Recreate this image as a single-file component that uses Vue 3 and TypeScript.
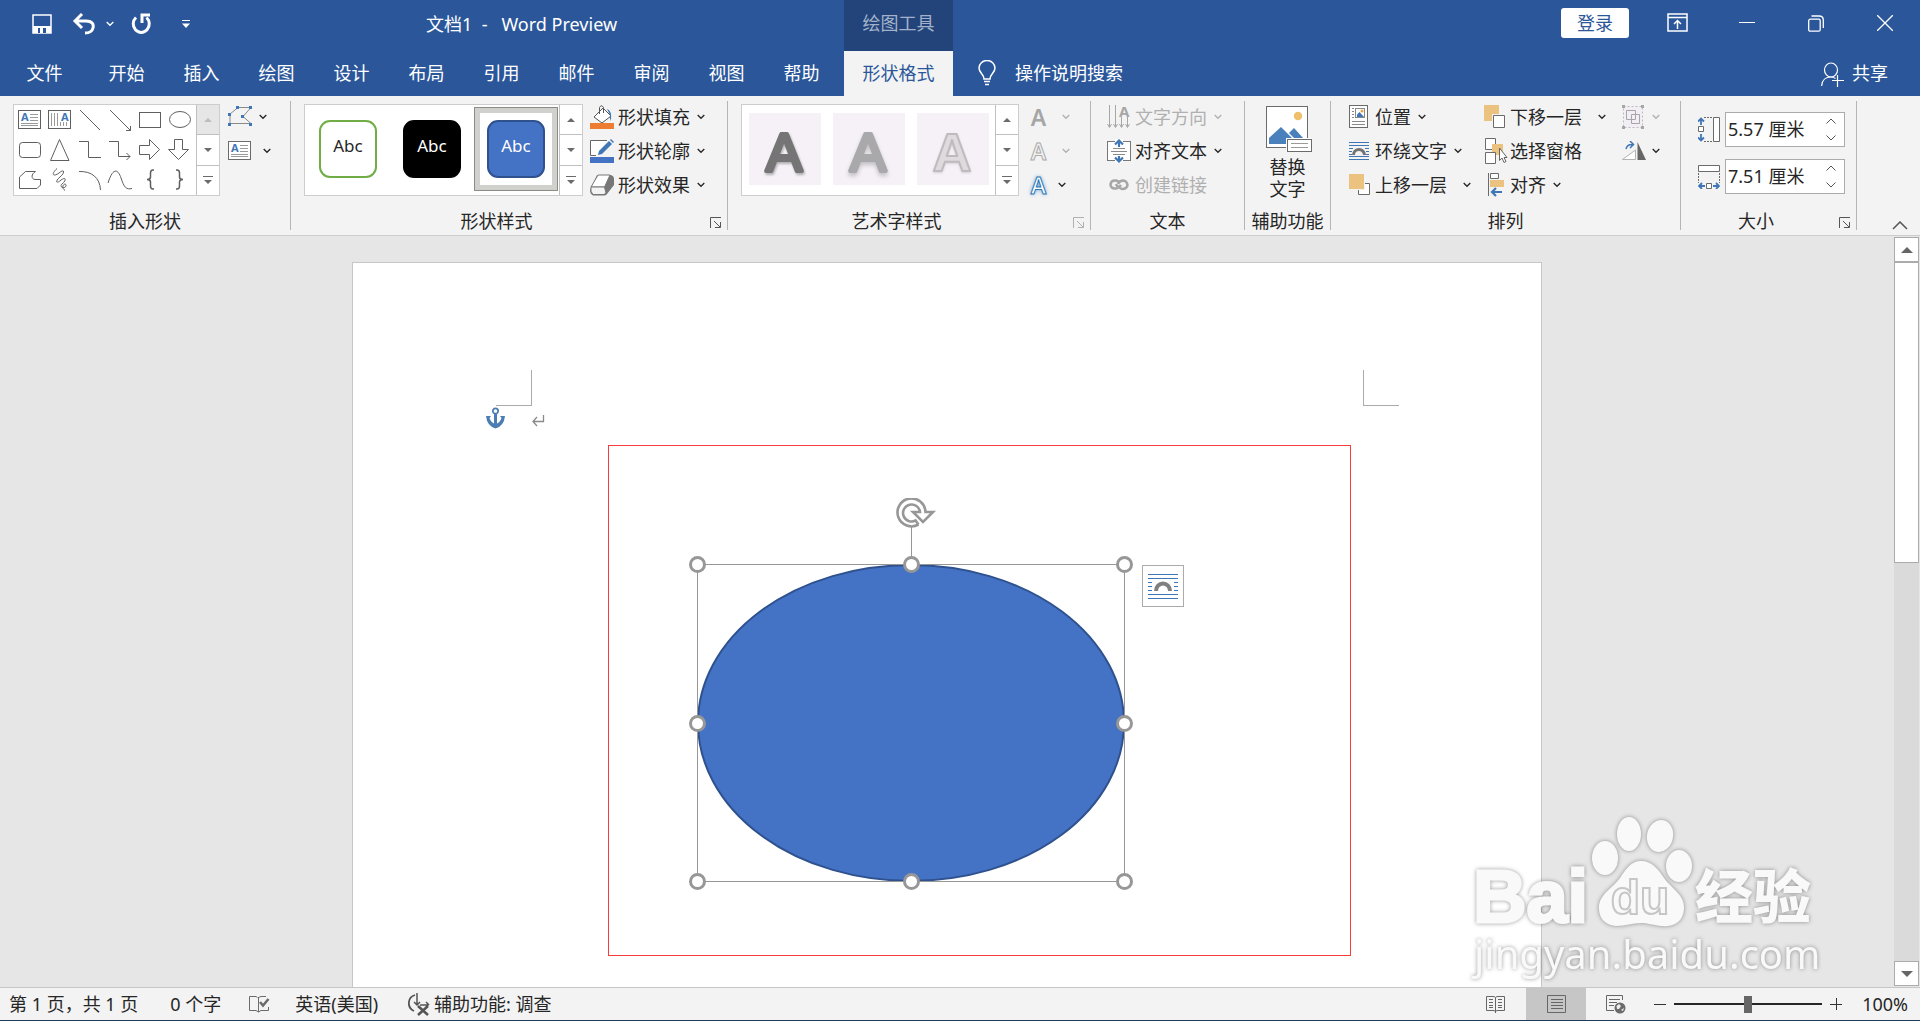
<script setup lang="ts">
import { h, ref } from 'vue'

type IconDef = [number, number, string]

const line = 'fill="none" stroke="currentColor"'
const grey = 'fill="none" stroke="#6b6b6b"'
const wrapLines =
  '<path d="M0 1.5H20M0 4.5H20M0 15.5H20M0 18.5H20" stroke="#3f76b5" fill="none"/><path d="M0 7.5H4M0 10.5H3M16 7.5H20M17 10.5H20M0 13.5H3M17 13.5H20" stroke="#3f76b5" fill="none"/><path d="M4.5 14a5.5 5.5 0 0 1 11 0" stroke="#737373" stroke-width="3" fill="none"/>'

const icons: Record<string, IconDef> = {
  save: [20, 20, '<path d="M1 1H19V19H1Z" fill="none" stroke="#fff" stroke-width="1.5"/><path d="M1 12H19V19H1Z" fill="#fff"/><path d="M6 14H14V19H6Z" fill="#2b579a"/><path d="M8 14H11V19H8Z" fill="#fff"/>'],
  undo: [24, 22, '<path d="M10 1L3 8L10 15M3 8H14C20 8 22 11 21 15C20 19 17 20 13 20" fill="none" stroke="#fff" stroke-width="3"/>'],
  redo: [22, 22, '<path d="M6 4.5A8 8.5 0 1 0 16.5 4.5" fill="none" stroke="#fff" stroke-width="3"/><path d="M12 10V2H20" fill="none" stroke="#fff" stroke-width="3"/>'],
  custom: [8, 8, '<path d="M0 .5H8" stroke="#fff"/><path d="M0 3.5H8L4 8Z" fill="#fff"/>'],
  display: [22, 20, '<path d="M1 1H20V18H1ZM1 4.5H20" fill="none" stroke="#fff" stroke-width="1.5"/><path d="M10.5 16V8M7 11L10.5 7.5L14 11" fill="none" stroke="#fff" stroke-width="1.5"/>'],
  min: [16, 16, '<path d="M0 7.5H16" stroke="#fff"/>'],
  restore: [16, 17, '<rect x=".7" y="4.2" width="11.5" height="12" rx="1.5" fill="none" stroke="#fff" stroke-width="1.3"/><path d="M3.5 1H11Q15.3 1 15.3 5V13" fill="none" stroke="#fff" stroke-width="1.3"/>'],
  close: [16, 16, '<path d="M0 0L16 16M16 0L0 16" stroke="#fff" stroke-width="1.3"/>'],
  bulb: [18, 26, '<path d="M6 19C6 14 1 13 1 8A8 7.5 0 0 1 17 8C17 13 12 14 12 19Z" fill="none" stroke="#fff" stroke-width="1.5"/><path d="M6 21.5H12M7 24.5H11" stroke="#fff" stroke-width="1.5"/>'],
  person: [23, 30, '<ellipse cx="10" cy="12" rx="6.5" ry="7" fill="none" stroke="#fff" stroke-width="1.2"/><path d="M.6 28C1 22 5 19 10 19C12 19 13 19.5 14.5 20.5M11 22.5H23M16.5 17V29" fill="none" stroke="#fff" stroke-width="1.2"/>'],
  chev: [8, 6, `<path d="M.7 1L4 4.3L7.3 1" ${line} stroke-width="1.3"/>`],
  up: [8, 4, '<path d="M0 4L4 0L8 4Z" fill="currentColor"/>'],
  down: [8, 4, '<path d="M0 0L4 4L8 0Z" fill="currentColor"/>'],
  scrollUp: [12, 6, '<path d="M0 6L6 0L12 6Z" fill="currentColor"/>'],
  scrollDown: [12, 6, '<path d="M0 0L6 6L12 0Z" fill="currentColor"/>'],
  more: [10, 8, '<path d="M0 .5H10" stroke="currentColor"/><path d="M1 4H9L5 8Z" fill="currentColor"/>'],
  launch: [12, 12, `<path d="M.5 11V.5H11M4 4L10 10M10.5 5V10.5H5" ${line}/>`],
  collapse: [16, 9, `<path d="M1 8L8 1L15 8" ${line} stroke-width="1.5"/>`],
  editShape: [25, 21, '<path d="M10 1.5H23L15 10.5L23 17.5H2V8Z" fill="none" stroke="#8a8a8a"/><path d="M8 0h3v3h-3zM21 0h3v3h-3zM0 7h3v3h-3zM13 9h3v3h-3zM0 17h3v3h-3zM21 17h3v3h-3z" fill="#3f76b5"/>'],
  textbox: [23, 19, '<rect x=".5" y=".5" width="22" height="18" fill="#fff" stroke="#6b6b6b"/><path d="M12 4.5H20M12 7.5H20M12 10.5H20M3 13.5H20M3 15.5H20" stroke="#9a9a9a"/><text x="3" y="11" font-family="Noto Sans" font-weight="700" font-size="11" fill="#3f76b5">A</text>'],
  fill: [24, 24, '<path d="M4 12L13 3L21 11L12 18Z" fill="#fff" stroke="#555"/><path d="M9.5 9V2.5Q11.5-1 13.5 2.5V8" fill="none" stroke="#555"/><path d="M17 4Q22 5 21 16Q19 13 20 10Z" fill="#3f76b5"/><rect y="18" width="24" height="6" fill="#ed7d31"/>'],
  outline: [24, 24, '<path d="M17 1.5H.5V16.5H6" fill="#fff" stroke="#666"/><path d="M8 16L9 12L19 2L22 5L12 15Z" fill="#3f76b5"/><path d="M20 1L21 0L24 3L23 4Z" fill="#3f76b5"/><rect y="18" width="24" height="6" fill="#4472c4"/>'],
  effect: [25, 22, '<path d="M7 1H21Q24 2 24 5V11L17 20Q16 21.500 14 21.500H3Q0 20 0 16Z" fill="#777"/><path d="M8 1H20L14.500 13H1Z" fill="#fff" stroke="#777"/><path d="M1 13H14.500L16 19L14 20.500H3Q0 18 1 13Z" fill="#f3f3f3" stroke="#777"/>'],
  textDir: [24, 24, '<path d="M2.5 0V22M8.5 0V22M14.5 12V22M20.5 12V22M.5 19L2.5 22.5L4.5 19M6.5 19L8.5 22.5L10.5 19M12.5 19L14.5 22.5L16.5 19M18.5 19L20.5 22.5L22.5 19" fill="none" stroke="#a6a6a6"/><text x="12" y="12" font-family="Noto Sans" font-weight="700" font-size="15" fill="#a6a6a6">A</text>'],
  alignText: [25, 24, '<rect x=".5" y="2.5" width="23" height="19" fill="#fff" stroke="#777"/><path d="M6 9.5H18M4 12.5H20M6 15.5H18" stroke="#8a8a8a"/><path d="M8 0H16V8H8ZM8 17H16V24H8Z" fill="#fff"/><path d="M12 8V2M8 5.5L12 1.5L16 5.5M12 17V22M8 18.5L12 22.5L16 18.5" fill="none" stroke="#3f76b5" stroke-width="2.2"/>'],
  link: [20, 14, '<path d="M11 4L7 2.5Q2 2 1.5 6.5Q2 11 6.5 10.5L9 10M9 9L13 11Q18 11 18.5 7Q18 3 14 2.5Q11 2.5 9 6M7 6Q9 11 12 7" fill="none" stroke="#a6a6a6" stroke-width="2.5"/>'],
  alt: [46, 46, '<rect x=".5" y=".5" width="41" height="41" fill="#fff" stroke="#6b6b6b"/><circle cx="32" cy="10" r="4.2" fill="#eec06b"/><path d="M3 38V32L15 21L26 32V38Z" fill="#4a80bb"/><path d="M23 27L28 22L38 33H29Z" fill="#4a80bb"/><rect x="20" y="32" width="26" height="15" fill="#fff"/><rect x="21.5" y="33.5" width="24" height="12" fill="#fff" stroke="#6b6b6b"/><path d="M25 37.5H42M25 41.5H42" stroke="#9a9a9a"/>'],
  position: [20, 24, '<rect x=".5" y=".5" width="18" height="22" fill="#fff" stroke="#6b6b6b"/><path d="M3 3.5H5M3 6.5H5M3 9.5H5M3 12.5H5M3 16.5H16M3 19.5H16" stroke="#8a8a8a"/><rect x="6.5" y="3.5" width="9" height="9" fill="#fff" stroke="#8a8a8a"/><path d="M8 12V9.5L10.5 7L15 12Z" fill="#3f76b5"/><circle cx="13" cy="6" r="1.5" fill="#e8a33d"/>'],
  wrap: [20, 20, wrapLines],
  front: [22, 22, '<path d="M9.5 9.5H20.5V20.5H9.5Z" fill="#fff" stroke="#6b6b6b"/><path d="M0 0H16V16H0Z" fill="#f3f3f3"/><path d="M0 0H15V15H0Z" fill="#ecc281"/>'],
  back: [22, 24, '<path d="M0 0H15V16H0Z" fill="#ecc281"/><path d="M8 9H22V23H8Z" fill="#f3f3f3"/><path d="M9.5 10.5H20.5V22.5H9.5Z" fill="#fff" stroke="#6b6b6b"/>'],
  pane: [24, 26, '<path d="M1.5 .5H11.5V11.5H1.5Z" fill="#fff" stroke="#6b6b6b"/><path d="M8 6H19V17H8Z" fill="#ecc281"/><path d="M1.5 14.5H11.5V25.5H1.5Z" fill="#fff" stroke="#6b6b6b"/><path d="M15.5 10V22.5L18 20L20 24.5L22 23.5L20 19.5H23Z" fill="#fff" stroke="#666"/>'],
  align: [20, 24, '<path d="M4.500 0V23M6.500 .5H14.500V5.500H6.500Z" fill="#fff" stroke="#6b6b6b"/><path d="M6 7H20V14H6Z" fill="#ecc281"/><path d="M18 19H8M12 15L8 19L12 23" fill="none" stroke="#3f76b5" stroke-width="2.200"/>'],
  group: [22, 24, '<path d="M1.5 1.5H20.5V22.5H1.5Z" fill="#f3eef5" stroke="#bbb" stroke-dasharray="2 2"/><path d="M4.5 5.5H13.5V14.5H4.5ZM9.5 9.5H17.5V18.5H9.5Z" fill="none" stroke="#a6a6a6"/><path d="M0 0h3v3h-3zM19 0h3v3h-3zM0 21h3v3h-3zM19 21h3v3h-3z" fill="#a6a6a6"/>'],
  rotate: [24, 20, '<path d="M.5 18.5H13.5V9Z" fill="#fff" stroke="#b3b3b3"/><path d="M15.5 1V19H24Z" fill="#666"/><path d="M4 8Q5 3 11 3.5M8 0L11.5 3.5L8 7" fill="none" stroke="#3f76b5" stroke-width="1.5"/>'],
  height: [22, 25, '<path d="M15.5 .5H21.5V24.5H15.5Z" fill="#fff" stroke="#6b6b6b"/><path d="M6 .5H15M6 24.5H15" stroke="#6b6b6b" stroke-dasharray="2 1"/><path d="M.5 9.5H5.5V14.5H.5Z" fill="#fff" stroke="#6b6b6b"/><path d="M3 8V2M0 4.5L3 1.5L6 4.5M3 17V23M0 20.5L3 23.5L6 20.5" fill="none" stroke="#3f76b5" stroke-width="1.8"/>'],
  width: [22, 24, '<path d="M.5 .5H21.5V6.5H.5Z" fill="#fff" stroke="#6b6b6b"/><path d="M.5 8V18M21.5 8V18" stroke="#6b6b6b" stroke-dasharray="2 1"/><path d="M8.5 18.5H13.5V23.5H8.5Z" fill="#fff" stroke="#6b6b6b"/><path d="M7 21H2M4 18L1 21L4 24M15 21H20M18 18L21 21L18 24" fill="none" stroke="#3f76b5" stroke-width="1.8"/>'],
  spinUp: [10, 6, `<path d="M.5 5.5L5 1L9.5 5.5" ${line}/>`],
  spinDown: [10, 6, `<path d="M.5 .5L5 5L9.5 .5" ${line}/>`],
  proof: [22, 20, `<path d="M9.5 3.5L8 2.5H1.5V16.5H8L10.5 18L13 16.5H20.5V13M10.5 3V18M10.5 3.5L13 2.5H18" ${grey}/><path d="M12 8L15 11.5L20.5 5" fill="none" stroke="#6b6b6b" stroke-width="2.5"/>`],
  access: [22, 24, '<path d="M7 3A8.5 8.5 0 0 0 6 19" fill="none" stroke="#555" stroke-width="1.8"/><path d="M9 1V13M6 10L9 13L12 10M12 13H20M18 10L20.5 12.5L18 15" fill="none" stroke="#555" stroke-width="1.5"/><path d="M10 14L20 23M20 14L10 23" fill="none" stroke="#555" stroke-width="2.5"/>'],
  read: [20, 19, '<path d="M9.5 2.5L8 1.5H.5V15.5H8L9.5 16.5L11 15.5H18.5V1.5H11L9.5 2.5V18M3 4.5H7M3 7.5H7M3 10.5H7M3 12.5H7M12 4.5H16M12 7.5H16M12 10.5H16M12 12.5H16" fill="none" stroke="#666"/>'],
  print: [19, 18, '<path d="M.5 .5H18.5V17.5H.5ZM4 4.5H16M4 7.5H16M4 10.5H16M4 13.5H16" fill="none" stroke="#666"/>'],
  web: [20, 19, '<path d="M16.5 5V.5H.5V15.5H8M3 4.5H14M3 7.5H11M3 10.5H8" fill="none" stroke="#666"/><circle cx="14" cy="13" r="5.5" fill="#6b6b6b"/><path d="M10.5 11L13 9L15 11L13 14L11 14ZM15 15L18 13L17 16Z" fill="#eee"/>'],
  minus: [12, 12, '<path d="M0 6.5H12" stroke="#333"/>'],
  plus: [12, 12, '<path d="M0 6.5H12M6.5 0V12" stroke="#333"/>'],
  anchor: [20, 22, '<circle cx="9.5" cy="4" r="2.7" fill="none" stroke="#4a7db3" stroke-width="1.7"/><path d="M8 6H11V20H8Z" fill="#4a7db3"/><path d="M0 9H5L3.5 11Q5 16 9.5 17Q14 16 15.5 11L14 9H19Q18 19 9.5 21.5Q1 19 0 9Z" fill="#4a7db3"/>'],
  ret: [13, 12, '<path d="M11.5 0V6.5H1M5 2L1 6.5L5 11" fill="none" stroke="#8a8a8a" stroke-width="1.3"/>'],
}

const Icon = (props: { name: string }) => {
  const [width, height, innerHTML] = icons[props.name]
  return h('svg', { class: 'icon', width, height, viewBox: `0 0 ${width} ${height}`, innerHTML, 'aria-hidden': 'true' })
}
Icon.props = ['name']

const shapes: [string, string][] = [
  ['文本框', '<rect x="4.5" y="5.5" width="22" height="18"/><path d="M16 9.5H24M16 12.5H24M16 15.5H24M7 18.5H24M7 20.5H24" stroke="#9a9a9a"/><text x="7" y="16" font-family="Noto Sans" font-weight="700" font-size="11" stroke="none" fill="#3f76b5">A</text>'],
  ['竖排文本框', '<rect x="4.5" y="5.5" width="22" height="18"/><path d="M7.5 8V21M10.5 8V21M13.5 8V21M16.5 17V21M19.5 17V21M22.5 17V21" stroke="#9a9a9a"/><text x="17" y="16" font-family="Noto Sans" font-weight="700" font-size="11" stroke="none" fill="#3f76b5">A</text>'],
  ['直线', '<path d="M6 5L26 25"/>'],
  ['箭头', '<path d="M6 5L26.5 25.5M26.5 21V25.5H22"/>'],
  ['矩形', '<rect x="5.5" y="7.5" width="21" height="15"/>'],
  ['椭圆', '<ellipse cx="16" cy="14.5" rx="10.5" ry="8"/>'],
  ['圆角矩形', '<rect x="5.5" y="7.5" width="21" height="15" rx="3"/>'],
  ['三角形', '<path d="M15.5 4.5L25 25.5H6.5Z"/>'],
  ['肘形连接符', '<path d="M5 6.5H14.5V22.5H27"/>'],
  ['肘形箭头', '<path d="M5 6.5H14.5V21.5H26M22.5 18L26 21.5L22.5 25"/>'],
  ['右箭头', '<path d="M5.5 10.5H15.5V4.5L25.5 14.5L15.5 24.5V19.5H5.5Z"/>'],
  ['下箭头', '<path d="M10.5 4.5H18.5V14.5H24.5L14.5 24.5L4.5 14.5H10.5Z"/>'],
  ['任意多边形', '<path d="M5.5 12L11.5 6.5H21.5C17 9 17 14 21 14.5H26.5V20L23 23.5H5.5Z"/>'],
  ['自由曲线', '<path d="M13 3.5C6 10 10 12 15 8C21 3 21 8 16 12C10 17 13 19 17 15C23 11 22 16 18 19C14 23 23 24 22 20C21 17 16 22 21 25.5"/>'],
  ['弧形', '<path d="M5 6.5C18 6 26 13 26.5 25"/>'],
  ['曲线', '<path d="M4 18C9 2 14 4 17 13S22 25 28 23.5"/>'],
  ['左大括号', '<path stroke-width="1.5" d="M20 5H19Q16.5 5 16.5 8V12Q16.5 14.5 13 14.5Q16.5 14.5 16.5 17V21Q16.5 24 19 24H20"/>'],
  ['右大括号', '<path stroke-width="1.5" d="M12 5H13Q15.5 5 15.5 8V12Q15.5 14.5 19 14.5Q15.5 14.5 15.5 17V21Q15.5 24 13 24H12"/>'],
]

const tabs = ['开始', '插入', '绘图', '设计', '布局', '引用', '邮件', '审阅', '视图', '帮助']
const windowButtons = [
  ['display', '功能区显示选项'],
  ['min', '最小化'],
  ['restore', '向下还原'],
  ['close', '关闭'],
]
const fxButtons = [
  ['fill', '形状填充'],
  ['outline', '形状轮廓'],
  ['effect', '形状效果'],
]
const handles = [
  [8.5, 8.5], [222.5, 8.5], [435.5, 8.5],
  [8.5, 167.5], [435.5, 167.5],
  [8.5, 325.5], [222.5, 325.5], [435.5, 325.5],
]

const shapeHeight = ref('5.57 厘米')
const shapeWidth = ref('7.51 厘米')
const zoom = ref(100)
</script>

<template>
  <div class="app">
    <header class="header">
      <div class="head-left">
        <div class="title-row">
          <button class="qat save" aria-label="保存"><Icon name="save" /></button>
          <button class="qat undo" aria-label="撤消"><Icon name="undo" /></button>
          <button class="qat arrow" aria-label="撤消选项"><Icon name="chev" /></button>
          <button class="qat redo" aria-label="重复"><Icon name="redo" /></button>
          <button class="qat custom" aria-label="自定义快速访问工具栏"><Icon name="custom" /></button>
          <h1 class="title">文档1&nbsp; -&nbsp;&nbsp; Word Preview</h1>
        </div>
        <nav class="tabs">
          <button class="tab file">文件</button>
          <button v-for="t in tabs" :key="t" class="tab">{{ t }}</button>
        </nav>
      </div>
      <div class="context">
        <span class="context-name">绘图工具</span>
        <button class="tab active">形状格式</button>
      </div>
      <div class="head-right">
        <div class="window-row">
          <button class="login">登录</button>
          <button v-for="[icon, label] in windowButtons" :key="icon" class="win" :aria-label="label"><Icon :name="icon" /></button>
        </div>
        <div class="search-row">
          <button class="tell"><Icon name="bulb" />操作说明搜索</button>
          <button class="share"><Icon name="person" />共享</button>
        </div>
      </div>
    </header>

    <section class="ribbon" aria-label="形状格式">
      <section class="group insert">
        <div class="body">
          <div class="gallery">
            <div class="shape-grid">
              <button v-for="[name, art] in shapes" :key="name" class="shape" :aria-label="name">
                <svg width="30" height="30" viewBox="0 0 30 30" fill="none" stroke="#5f5f5f" aria-hidden="true" v-html="art"></svg>
              </button>
            </div>
            <div class="scroller">
              <button disabled aria-label="上一行"><Icon name="up" /></button>
              <button aria-label="下一行"><Icon name="down" /></button>
              <button aria-label="其他"><Icon name="more" /></button>
            </div>
          </div>
          <div class="rows">
            <button class="row edit" aria-label="编辑形状"><Icon name="editShape" /><Icon name="chev" /></button>
            <button class="row box" aria-label="文本框"><Icon name="textbox" /><Icon name="chev" /></button>
          </div>
        </div>
        <footer class="foot"><h2>插入形状</h2></footer>
      </section>

      <section class="group styles">
        <div class="body">
          <div class="gallery">
            <div class="style-list">
              <button class="style"><span class="swatch green">Abc</span></button>
              <button class="style"><span class="swatch black">Abc</span></button>
              <button class="style selected"><span class="swatch blue">Abc</span></button>
            </div>
            <div class="scroller">
              <button aria-label="上一行"><Icon name="up" /></button>
              <button aria-label="下一行"><Icon name="down" /></button>
              <button aria-label="其他"><Icon name="more" /></button>
            </div>
          </div>
          <div class="rows">
            <button v-for="[icon, label] in fxButtons" :key="icon" class="row">
              <span class="slot"><Icon :name="icon" /></span>{{ label }}<Icon name="chev" />
            </button>
          </div>
        </div>
        <footer class="foot"><h2>形状样式</h2><button class="launcher" aria-label="设置形状格式"><Icon name="launch" /></button></footer>
      </section>

      <section class="group wordart">
        <div class="body">
          <div class="gallery">
            <div class="art-list">
              <button v-for="k in 3" :key="k" class="art" :aria-label="'艺术字 ' + k">
                <svg width="72" height="72" viewBox="0 0 72 72" :class="'art-' + k"><text x="35" y="58" text-anchor="middle">A</text></svg>
              </button>
            </div>
            <div class="scroller">
              <button aria-label="上一行"><Icon name="up" /></button>
              <button aria-label="下一行"><Icon name="down" /></button>
              <button aria-label="其他"><Icon name="more" /></button>
            </div>
          </div>
          <div class="rows">
            <button class="row off" disabled aria-label="文本填充"><span class="glyph solid">A</span><Icon name="chev" /></button>
            <button class="row off" disabled aria-label="文本轮廓"><span class="glyph hollow">A</span><Icon name="chev" /></button>
            <button class="row" aria-label="文本效果"><span class="glyph glow">A</span><Icon name="chev" /></button>
          </div>
        </div>
        <footer class="foot"><h2>艺术字样式</h2><button class="launcher off" disabled aria-label="设置文本效果格式"><Icon name="launch" /></button></footer>
      </section>

      <section class="group text">
        <div class="body">
          <div class="rows">
            <button class="row off" disabled><span class="slot"><Icon name="textDir" /></span>文字方向<Icon name="chev" /></button>
            <button class="row"><span class="slot"><Icon name="alignText" /></span>对齐文本<Icon name="chev" /></button>
            <button class="row off" disabled><span class="slot"><Icon name="link" /></span>创建链接</button>
          </div>
        </div>
        <footer class="foot"><h2>文本</h2></footer>
      </section>

      <section class="group access">
        <div class="body">
          <button class="big"><Icon name="alt" /><span>替换<br />文字</span></button>
        </div>
        <footer class="foot"><h2>辅助功能</h2></footer>
      </section>

      <section class="group arrange">
        <div class="body">
          <div class="rows">
            <button class="row"><span class="slot"><Icon name="position" /></span>位置<Icon name="chev" /></button>
            <button class="row"><span class="slot"><Icon name="wrap" /></span>环绕文字<Icon name="chev" /></button>
            <button class="row split"><span class="slot"><Icon name="front" /></span>上移一层<Icon name="chev" /></button>
          </div>
          <div class="rows">
            <button class="row split"><span class="slot"><Icon name="back" /></span>下移一层<Icon name="chev" /></button>
            <button class="row"><span class="slot"><Icon name="pane" /></span>选择窗格</button>
            <button class="row"><span class="slot"><Icon name="align" /></span>对齐<Icon name="chev" /></button>
          </div>
          <div class="rows">
            <button class="row off" disabled aria-label="组合"><span class="slot"><Icon name="group" /></span><Icon name="chev" /></button>
            <button class="row" aria-label="旋转"><span class="slot"><Icon name="rotate" /></span><Icon name="chev" /></button>
          </div>
        </div>
        <footer class="foot"><h2>排列</h2></footer>
      </section>

      <section class="group size">
        <div class="body">
          <div class="field">
            <label for="shape-height" aria-label="高度"><Icon name="height" /></label>
            <div class="spin">
              <input id="shape-height" v-model="shapeHeight" type="text" />
              <div class="spin-buttons"><button aria-label="增加高度"><Icon name="spinUp" /></button><button aria-label="减小高度"><Icon name="spinDown" /></button></div>
            </div>
          </div>
          <div class="field">
            <label for="shape-width" aria-label="宽度"><Icon name="width" /></label>
            <div class="spin">
              <input id="shape-width" v-model="shapeWidth" type="text" />
              <div class="spin-buttons"><button aria-label="增加宽度"><Icon name="spinUp" /></button><button aria-label="减小宽度"><Icon name="spinDown" /></button></div>
            </div>
          </div>
        </div>
        <footer class="foot"><h2>大小</h2><button class="launcher" aria-label="布局"><Icon name="launch" /></button></footer>
      </section>

      <button class="collapse" aria-label="折叠功能区"><Icon name="collapse" /></button>
    </section>

    <main class="workspace">
      <div class="desk">
        <article class="page">
          <i class="corner left"></i>
          <i class="corner right"></i>
          <Icon name="anchor" class="anchor" />
          <Icon name="ret" class="return" />
          <div class="frame"></div>
          <svg class="selection" width="444" height="392" viewBox="0 -58 444 392" aria-label="椭圆">
            <ellipse cx="222" cy="167" rx="213" ry="158" fill="#4472c4" stroke="#2f528f" stroke-width="2" />
            <path d="M8.5 8.5H435.5V325.5H8.5ZM222.5 8V-30" fill="none" stroke="#979797" />
            <circle v-for="([x, y], i) in handles" :key="i" :cx="x" :cy="y" r="7" fill="#fff" stroke="#979797" stroke-width="3" />
            <path d="M229.5 -31.5A14 14 0 1 1 236.5 -44H244L234 -34L224 -44H231A8.5 8.5 0 1 0 226.5 -35.5L229.5 -31.5" fill="none" stroke="#979797" stroke-width="2.6" />
          </svg>
          <button class="layout-button" aria-label="布局选项">
            <svg width="30" height="26" viewBox="0 0 30 26" fill="none" aria-hidden="true">
              <path d="M0 1.5H30M0 5.5H30M0 9.5H4M26 9.5H30M0 13.5H4M26 13.5H30M0 17.5H4M26 17.5H30M0 21.5H30M0 25.5H30" stroke="#3f76b5" />
              <path d="M8 18A7 7.5 0 0 1 22 18" stroke="#808080" stroke-width="4" />
            </svg>
          </button>
        </article>
      </div>
      <div class="scrollbar">
        <button aria-label="向上滚动"><Icon name="scrollUp" /></button>
        <div class="track"><div class="thumb"></div></div>
        <button aria-label="向下滚动"><Icon name="scrollDown" /></button>
      </div>
      <svg class="watermark" width="356" height="180" viewBox="0 0 356 180" aria-hidden="true">
        <g class="mark">
          <text class="bai" x="8" y="119">Bai</text>
          <ellipse cx="140" cy="55" rx="13" ry="17" />
          <ellipse cx="164" cy="31" rx="12" ry="17" />
          <ellipse cx="195" cy="33" rx="13" ry="16" transform="rotate(12 195 33)" />
          <ellipse cx="214" cy="63" rx="13" ry="16" />
          <path d="M176 58C187 58 193 66 199 75C207 86 220 92 219 106C218 120 208 124 196 123C187 122 183 120 176 120C167 120 161 123 151 123C139 122 133 114 134 102C136 90 148 85 155 75C161 66 166 58 176 58Z" />
          <text class="du" x="175" y="111" text-anchor="middle">du</text>
          <text class="jy" x="230" y="115">经验</text>
          <text class="url" x="9" y="166">jingyan.baidu.com</text>
        </g>
      </svg>
    </main>

    <footer class="status">
      <span class="pages">第 1 页，共 1 页</span>
      <span class="words">0 个字</span>
      <button class="proof" aria-label="校对"><Icon name="proof" /></button>
      <button class="lang">英语(美国)</button>
      <button class="a11y"><Icon name="access" />辅助功能: 调查</button>
      <div class="views">
        <button aria-label="阅读视图"><Icon name="read" /></button>
        <button class="on" aria-label="页面视图"><Icon name="print" /></button>
        <button aria-label="Web 版式视图"><Icon name="web" /></button>
      </div>
      <div class="zoom">
        <button aria-label="缩小"><Icon name="minus" /></button>
        <input v-model="zoom" type="range" min="10" max="190" aria-label="缩放" />
        <button aria-label="放大"><Icon name="plus" /></button>
        <output>{{ zoom }}%</output>
      </div>
    </footer>
  </div>
</template>

<style>
html,
body,
#app {
  height: 100%;
}
body {
  margin: 0;
  overflow: hidden;
}
.icon {
  display: block;
  flex: none;
}
</style>

<style scoped>
.app {
  display: flex;
  flex-direction: column;
  height: 100%;
  font: 18px/22px "Noto Sans", "Noto Sans CJK SC", sans-serif;
  color: #262626;
  background: #e6e6e6;
}
.app * {
  box-sizing: border-box;
}
button {
  display: flex;
  align-items: center;
  padding: 0;
  border: 0;
  background: none;
  font: inherit;
  color: inherit;
  white-space: nowrap;
}
h1,
h2 {
  margin: 0;
  font: inherit;
}

/* title bar and tabs */
.header {
  display: flex;
  flex: none;
  background: #2b579a;
  color: #fff;
}
.head-left {
  flex: 0 0 844px;
}
.title-row,
.window-row {
  display: flex;
  align-items: center;
  height: 51px;
}
.title-row {
  padding: 0 0 4px 32px;
}
.undo {
  margin-left: 20px;
}
.arrow {
  margin-left: 10px;
}
.redo {
  margin-left: 16px;
}
.custom {
  margin-left: 30px;
}
.title {
  margin-left: 236px;
}
.tabs {
  display: flex;
  height: 45px;
}
.tab {
  justify-content: center;
  flex: none;
  width: 75px;
  height: 45px;
  padding-bottom: 2px;
}
.tab.file {
  width: 89px;
}
.context {
  flex: 0 0 109px;
}
.context-name {
  display: block;
  height: 51px;
  padding-top: 12px;
  background: #22447a;
  color: #a3b2ca;
  text-align: center;
}
.tab.active {
  width: 100%;
  background: #f3f3f3;
  color: #2b579a;
}
.head-right {
  flex: 1;
}
.window-row {
  justify-content: flex-end;
  padding: 0 1px 5px 0;
}
.login {
  justify-content: center;
  width: 68px;
  height: 30px;
  margin-right: 14px;
  border-radius: 3px;
  background: #fff;
  color: #2b579a;
}
.win {
  justify-content: center;
  width: 69px;
  height: 46px;
}
.search-row {
  display: flex;
  justify-content: space-between;
  height: 43px;
  padding: 0 32px 0 25px;
}
.tell {
  gap: 19px;
}
.share {
  gap: 8px;
}

/* ribbon */
.ribbon {
  display: flex;
  flex: none;
  padding: 5px 0;
  border-bottom: 1px solid #cdcdcd;
  background: #f3f3f3;
}
.group {
  display: flex;
  flex: none;
  flex-direction: column;
  justify-content: space-between;
  height: 129px;
  border-right: 1px solid #b5b5b5;
}
.group .body {
  display: flex;
}
.foot {
  display: flex;
  height: 18px;
  line-height: 18px;
}
.foot h2 {
  flex: 1;
  text-align: center;
}
.launcher {
  justify-content: center;
  width: 25px;
  height: 18px;
  padding: 4px 0 0 3px;
  color: #555;
}
.launcher.off {
  color: #b0b0b0;
}
.insert {
  width: 291px;
  padding-left: 13px;
}
.insert .foot {
  padding-right: 13px;
}
.styles {
  width: 437px;
  padding-left: 13px;
}
.styles .foot,
.wordart .foot {
  margin-left: -13px;
}
.wordart {
  width: 363px;
  padding-left: 13px;
}
.text {
  width: 154px;
  padding-left: 16px;
}
.text .foot {
  margin-left: -16px;
}
.access {
  width: 86px;
}
.arrange {
  width: 350px;
  padding-left: 18px;
}
.arrange .foot {
  margin-left: -18px;
}
.size {
  width: 176px;
  padding-left: 17px;
}
.size .foot {
  margin-left: -17px;
}
.gallery {
  display: flex;
  height: 92px;
  margin-top: 3px;
  border: 1px solid #cdcdcd;
  background: #fff;
}
.shape-grid {
  display: grid;
  grid-template-columns: repeat(6, 30px);
  grid-auto-rows: 30px;
  width: 182px;
}
.scroller {
  display: flex;
  flex-direction: column;
  width: 23px;
  border-left: 1px solid #c0c0c0;
}
.scroller button {
  flex: 1;
  justify-content: center;
  color: #6b6b6b;
}
.scroller button + button {
  border-top: 1px solid #c0c0c0;
}
.scroller button:disabled {
  background: #e6e6e6;
  color: #bdbdbd;
}
.rows {
  display: flex;
  flex-direction: column;
  gap: 3px;
}
.row {
  gap: 7px;
  height: 31px;
}
.slot {
  display: flex;
  justify-content: center;
  width: 24px;
  margin-right: -3px;
}
.off {
  color: #b0b0b0;
}
.insert .rows {
  margin-left: 8px;
}
.edit {
  gap: 6px;
}
.box {
  gap: 12px;
}
.styles .rows {
  margin-left: 7px;
}
.style-list {
  display: flex;
  padding: 2px 1px;
}
.style {
  justify-content: center;
  width: 84px;
  height: 84px;
}
.style.selected {
  border: 1px solid #8c8c86;
  background: #fff;
  box-shadow: inset 0 0 0 5px #d0d0cc;
}
.swatch {
  width: 58px;
  height: 58px;
  padding-top: 12px;
  border: 2px solid #70ad47;
  border-radius: 11px;
  font-size: 17px;
  line-height: 24px;
  text-align: center;
}
.swatch.black {
  border-color: #000;
  background: #000;
  color: #fff;
}
.swatch.blue {
  border-color: #2f528f;
  background: #4472c4;
  color: #fff;
}
.art-list {
  display: flex;
  gap: 12px;
  padding: 8px 6px 8px 7px;
}
.art {
  width: 72px;
  height: 72px;
  background: #f5f1f7;
}
.art text {
  font: 400 54px "Liberation Sans", sans-serif;
}
.art svg {
  stroke-width: 4;
  stroke-linejoin: round;
}
.art-1 {
  fill: #757575;
  stroke: #757575;
  filter: drop-shadow(1px 2px 1px #0004);
}
.art-2 {
  fill: #a9a9ab;
  stroke: #a9a9ab;
  filter: drop-shadow(0 3px 2px #0003);
}
.art-3 {
  fill: #dedade;
  stroke: #bdbbbd;
  filter: drop-shadow(0 1px 1px #0002);
}
.art .art-3 {
  stroke-width: 2;
}
.art .art-3 text {
  font-weight: 700;
}
.wordart .rows {
  margin-left: 11px;
}
.glyph {
  width: 17px;
  margin-right: 8px;
  font-size: 23px;
  font-weight: 600;
  text-align: center;
}
.glyph.solid {
  color: #a6a6a6;
}
.glyph.hollow {
  color: #f3f3f3;
  -webkit-text-stroke: 1px #aaa;
}
.glyph.glow {
  margin-right: 4px;
  color: #fff;
  -webkit-text-stroke: 1px #2e75b6;
  text-shadow: 0 0 4px #5b9bd5;
}
.big {
  flex-direction: column;
  gap: 4px;
  width: 100%;
  padding: 5px 0 0 3px;
}
.big span {
  margin-right: 3px;
}
.arrange .rows + .rows {
  margin-left: 9px;
}
.arrange .rows:first-child {
  width: 126px;
}
.arrange .rows:nth-child(2) {
  width: 129px;
}
.arrange .slot {
  justify-content: flex-start;
  margin-right: -5px;
}
.arrange .rows:last-child .slot {
  margin-right: -1px;
}
.row.split > .icon:last-child {
  margin-left: 9px;
}
.size .body {
  flex-direction: column;
  gap: 12px;
  padding-top: 11px;
}
.field {
  display: flex;
  align-items: center;
  gap: 5px;
}
.spin {
  display: flex;
  width: 120px;
  height: 35px;
  border: 1px solid #ababab;
  background: #fff;
}
.spin input {
  flex: 1;
  min-width: 0;
  padding: 0 0 2px 2px;
  border: 0;
  outline: 0;
  background: none;
  font: inherit;
  color: inherit;
}
.spin-buttons {
  display: flex;
  flex-direction: column;
  width: 26px;
}
.spin-buttons button {
  flex: 1;
  padding-left: 8px;
  color: #555;
}
.collapse {
  align-self: flex-end;
  margin-left: auto;
  padding-right: 12px;
  color: #555;
}

/* document area */
.workspace {
  position: relative;
  display: flex;
  flex: 1;
  min-height: 0;
}
.desk {
  flex: 1;
  min-width: 0;
  overflow: hidden;
  padding-top: 26px;
}
.page {
  position: relative;
  width: 1190px;
  height: 1684px;
  margin: 0 auto;
  border: 1px solid #c6c6c6;
  background: #fff;
}
.page > * {
  position: absolute;
}
.corner {
  top: 107px;
  width: 36px;
  height: 36px;
  border-bottom: 1px solid #ababab;
}
.corner.left {
  left: 143px;
  border-right: 1px solid #ababab;
}
.corner.right {
  right: 142px;
  border-left: 1px solid #ababab;
}
.anchor {
  top: 144px;
  left: 133px;
}
.return {
  top: 152px;
  left: 179px;
}
.frame {
  top: 182px;
  left: 255px;
  width: 743px;
  height: 511px;
  border: 1px solid #f83c3c;
}
.selection {
  top: 235px;
  left: 336px;
}
.layout-button {
  top: 302px;
  left: 789px;
  justify-content: center;
  width: 42px;
  height: 42px;
  border: 1px solid #ababab;
  background: #fff;
}
.scrollbar {
  display: flex;
  flex: none;
  flex-direction: column;
  width: 26px;
  padding: 1px 1px 1px 0;
}
.scrollbar button {
  justify-content: center;
  height: 25px;
  border: 1px solid #ababab;
  background: #fff;
  color: #666;
}
.track {
  flex: 1;
  background: #dadada;
}
.thumb {
  height: 43%;
  border: 1px solid #ababab;
  background: #fff;
}
.watermark {
  position: absolute;
  right: 99px;
  bottom: 4px;
  pointer-events: none;
}
.mark {
  fill: #f9f9f9;
  filter: drop-shadow(0 0 2px #0006);
}
.bai {
  font: 700 74px "Liberation Sans", sans-serif;
  stroke: #f9f9f9;
  stroke-width: 3;
}
.du {
  font: 700 48px "Liberation Sans", sans-serif;
  stroke: #c6c6c6;
  stroke-width: 2;
}
.jy {
  font: 900 58px "Noto Sans CJK SC", sans-serif;
}
.url {
  font: 400 40px "Noto Sans", sans-serif;
}

/* status bar */
.status {
  display: flex;
  flex: none;
  align-items: center;
  height: 34px;
  padding: 0 12px 0 9px;
  border-top: 1px solid #c6c6c6;
  border-bottom: 1px solid #1f3a57;
  background: #f3f3f3;
}
.words {
  margin-left: 32px;
}
.proof {
  margin-left: 27px;
}
.lang {
  margin-left: 25px;
}
.a11y {
  gap: 4px;
  margin-left: 30px;
}
.views {
  display: flex;
  align-self: stretch;
  margin-left: auto;
}
.views button {
  justify-content: center;
  width: 60px;
}
.views .on {
  background: #c6c6c6;
}
.zoom {
  display: flex;
  align-items: center;
  gap: 8px;
  margin-left: 8px;
}
.zoom input {
  width: 148px;
  height: 18px;
  margin: 0;
  appearance: none;
  background: linear-gradient(#262626, #262626) center / 100% 2px no-repeat;
}
.zoom input::-webkit-slider-thumb {
  width: 8px;
  height: 17px;
  appearance: none;
  background: #666;
}
.zoom output {
  min-width: 48px;
  margin-left: 10px;
  text-align: right;
}
</style>
